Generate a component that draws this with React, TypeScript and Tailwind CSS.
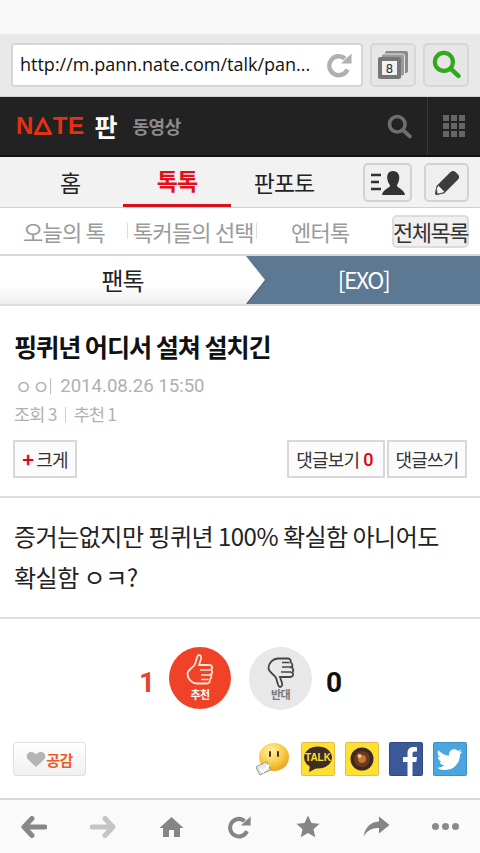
function Arrow({ color, flip }: { color: string; flip?: boolean }) {
  return (
    <svg width="26" height="22" viewBox="0 0 26 22" style={flip ? { transform: "scaleX(-1)" } : undefined}>
      <path d="M11 2.5 L3 11 L11 19.5 M4 11 H24" fill="none" stroke={color} strokeWidth="5" strokeLinecap="round" strokeLinejoin="round" />
    </svg>
  );
}
function Reload({ color, size }: { color: string; size: number }) {
  return (
    <svg width={size} height={size} viewBox="0 0 26 26">
      <path d="M20.5 17.5 A9.5 9.5 0 1 1 18 6.5" fill="none" stroke={color} strokeWidth="4.4" />
      <path d="M14 11.5 L24.5 11.5 L24.5 1.5 Z" fill={color} />
    </svg>
  );
}
function Mag({ color, size }: { color: string; size: number }) {
  return (
    <svg width={size} height={size} viewBox="0 0 28 28">
      <circle cx="11.5" cy="11.5" r="8.7" fill="none" stroke={color} strokeWidth="4" />
      <path d="M18 18 L25.5 25" stroke={color} strokeWidth="4.4" strokeLinecap="round" />
    </svg>
  );
}

export default function App() {
  return (
    <div className="w-[480px] h-[853px] overflow-hidden bg-white flex flex-col font-['Noto_Sans_CJK_KR','Noto_Sans',sans-serif]">
      <div className="h-[34px] bg-[#f8f8f8]" />

      {/* browser bar */}
      <div className="h-[63px] bg-[#e9e9e9] flex items-center pl-[11px] pb-[1px] border-b border-[#d0d0d0]">
        <div className="w-[352px] h-[44px] bg-white rounded-[4px] border-2 border-[#d6d6d6] flex items-center pl-[7px] pr-[8px] justify-between">
          <span className="font-['Open_Sans','Noto_Sans',sans-serif] text-[18px] text-[#111] whitespace-nowrap">http://m.pann.nate.com/talk/pan...</span>
          <Reload color="#b0b0b0" size={26} />
        </div>
        <div className="ml-[7px] w-[46px] h-[44px] rounded-[5px] bg-[#e6e6e6] border-2 border-[#d6d6d6] flex items-center justify-center">
          <svg width="32" height="30" viewBox="0 0 32 30">
            <rect x="8" y="1" width="23" height="22" rx="2" fill="#8a8a8a" />
            <rect x="4.5" y="4" width="23" height="22" rx="2" fill="#9a9a9a" stroke="#e6e6e6" strokeWidth="1" />
            <rect x="1" y="7" width="23" height="22" rx="2" fill="#777" />
            <rect x="5" y="11" width="15" height="14" fill="#f2f2f2" />
            <text x="12.5" y="23" fontSize="13" textAnchor="middle" fill="#333" fontFamily="Roboto, sans-serif">8</text>
          </svg>
        </div>
        <div className="ml-[7px] w-[46px] h-[44px] rounded-[5px] bg-[#e6e6e6] border-2 border-[#d6d6d6] flex items-center justify-center">
          <Mag color="#33a81c" size={29} />
        </div>
      </div>

      {/* dark header */}
      <div className="h-[60px] bg-[#222222] border-b-2 border-[#111] flex items-center">
        <span className="ml-[16px] flex items-center font-['Liberation_Sans',sans-serif] font-bold text-[24px] tracking-[0.5px] text-[#e5310f] leading-none">
          N
          <svg width="18" height="18" viewBox="0 0 18 18" className="mx-[0.5px]">
            <path d="M9 2 L16.5 16.5 H1.5 Z" fill="none" stroke="#e5310f" strokeWidth="3" />
          </svg>
          TE
        </span>
        <span className="ml-[10px] text-[25px] font-bold text-white leading-none">판</span>
        <span className="ml-[15px] text-[18px] font-bold text-[#8c8c8c] tracking-[-0.5px] leading-none">동영상</span>
        <div className="ml-auto mr-[15px]"><Mag color="#6e6e6e" size={25} /></div>
        <div className="w-[53px] h-full border-l border-[#3a3a3a] flex items-center justify-center">
          <div className="grid grid-cols-3 gap-[2px]">
            {Array.from({ length: 9 }).map((_, i) => (
              <div key={i} className="w-[6px] h-[6px] bg-[#666]" />
            ))}
          </div>
        </div>
      </div>

      {/* tabs */}
      <div className="h-[51px] bg-[#f2f2f2] border-b border-[#cfcfcf] flex">
        <div className="w-[123px] flex items-center justify-center pl-[17px] text-[23px] text-[#222] tracking-[-1px]">홈</div>
        <div className="w-[108px] flex items-center justify-center text-[23px] font-bold text-[#e0111a] tracking-[-1px] border-b-[3px] border-[#d8121c]">톡톡</div>
        <div className="w-[106px] flex items-center justify-center text-[23px] text-[#222] tracking-[-1px]">판포토</div>
        <div className="ml-[26px] mt-[6px] w-[49px] h-[39px] rounded-[5px] bg-[#efefef] border-2 border-[#d2d2d2] flex items-center justify-center">
          <svg width="36" height="26" viewBox="0 0 36 26">
            <path d="M1 5 H11 M1 12 H9 M1 19 H11" stroke="#333" strokeWidth="2.4" />
            <path d="M23 1 C28 1 30 5 29 10 C28.5 13 27 14.5 27 16 C28 18.5 34 19 35 25 H12 C13 19 19 18.5 20 16 C20 14.5 18 13 17.5 10 C16.5 5 18 1 23 1 Z" fill="#333" />
          </svg>
        </div>
        <div className="ml-[12px] mt-[6px] w-[45px] h-[39px] rounded-[5px] bg-[#efefef] border-2 border-[#d2d2d2] flex items-center justify-center">
          <svg width="28" height="28" viewBox="0 0 28 28">
            <path d="M17.5 3 C19 1.5 21 1.5 22.5 3 L25 5.5 C26.5 7 26.5 9 25 10.5 L11 24.5 L4 26 C2.5 26 2 25.5 2 24 L3.5 17 Z" fill="#3d3d3d" />
            <path d="M5.5 16.5 L11.5 22.5 L9.5 24 L4.2 25 L3.5 19 Z" fill="#f4f4f4" stroke="#555" strokeWidth="0.8" />
          </svg>
        </div>
      </div>

      {/* sub nav */}
      <div className="h-[48px] bg-white border-b-2 border-[#d8d8d8] flex items-center text-[22px] text-[#9a9a9a] tracking-[-0.8px]">
        <span className="ml-[23px] w-[104px] whitespace-nowrap">오늘의 톡</span>
        <span className="w-px h-[16px] bg-[#ddd]" />
        <span className="ml-[5px] w-[123px] whitespace-nowrap">톡커들의 선택</span>
        <span className="w-px h-[16px] bg-[#ddd]" />
        <span className="ml-[34px] w-[66px] whitespace-nowrap">엔터톡</span>
        <span className="ml-[35px] w-[77px] h-[33px] rounded-[5px] bg-[#f0f0f0] border-2 border-[#dcdcdc] flex items-center justify-center text-[#333] whitespace-nowrap tracking-[-1.5px]">전체목록</span>
      </div>

      {/* breadcrumb */}
      <div className="h-[50px] flex border-b-2 border-[#dcdcdc] bg-[#5d7892]">
        <div className="w-[246px] bg-gradient-to-b from-white from-60% to-[#efefef] flex items-center justify-center pr-[1px] text-[24px] text-[#222] tracking-[-1px] pb-[1px]">팬톡</div>
        <svg width="20" height="48" viewBox="0 0 20 48" className="shrink-0 block">
          <defs>
            <linearGradient id="chev" x1="0" y1="0" x2="0" y2="1">
              <stop offset="0.6" stopColor="#ffffff" />
              <stop offset="1" stopColor="#efefef" />
            </linearGradient>
          </defs>
          <path d="M0 24 L19 24 L0 48 Z" fill="#3f5468" transform="translate(1 0)" />
          <path d="M0 0 L19 24 L0 48 Z" fill="url(#chev)" />
        </svg>
        <div className="flex-1 flex items-center justify-center pr-[19px] pb-[1px] text-[23px] text-white tracking-[-1.5px]">[EXO]</div>
      </div>

      {/* article head */}
      <div className="h-[192px] border-b-2 border-[#dedede] px-[13px] flex flex-col">
        <h1 className="ml-[1px] mt-[23px] h-[34px] text-[25.2px] leading-[34px] font-bold text-[#111] tracking-[-1.1px] whitespace-nowrap">핑퀴년 어디서 설쳐 설치긴</h1>
        <div className="ml-[1px] mt-[11px] h-[24px] leading-[24px] text-[18.6px] text-[#b0b0b0] flex items-center">
          <span className="ml-[1px] tracking-[0.5px]">ㅇㅇ</span>
          <span className="w-px h-[16px] bg-[#bbb]" />
          <span className="ml-[9px] font-['Roboto',sans-serif]">2014.08.26 15:50</span>
        </div>
        <div className="mt-[4px] ml-[1px] h-[24px] leading-[24px] text-[17.5px] text-[#b0b0b0] tracking-[-0.8px] flex items-center">
          <span>조회 3</span>
          <span className="ml-[8px] w-px h-[15px] bg-[#ccc]" />
          <span className="ml-[8px]">추천 1</span>
        </div>
        <div className="mt-[14px] flex">
          <div className="w-[64px] h-[38px] border-2 border-[#d8d8d8] bg-[#fbfbfb] flex items-center justify-center text-[18px] text-[#333] tracking-[-0.8px]">
            <span className="text-[#e60012] font-bold text-[20px] mr-[3px] leading-none">+</span>크게
          </div>
          <div className="ml-auto w-[98px] h-[38px] border-2 border-[#d8d8d8] bg-[#fbfbfb] flex items-center justify-center pr-[3px] text-[18px] text-[#333] tracking-[-0.8px]">
            댓글보기<span className="ml-[4px] text-[#e60012] font-['Roboto',sans-serif] font-medium">0</span>
          </div>
          <div className="ml-[2px] w-[80px] h-[38px] border-2 border-[#d8d8d8] bg-[#fbfbfb] flex items-center justify-center text-[18px] text-[#333] tracking-[-0.8px]">댓글쓰기</div>
        </div>
      </div>

      {/* body */}
      <div className="h-[121px] border-b-2 border-[#e0e0e0] pt-[17px] px-[14px] text-[24px] leading-[41px] text-[#222] tracking-[-0.5px]">
        <p className="whitespace-nowrap">증거는없지만 핑퀴년 100% 확실함 아니어도</p>
        <p>확실함 ㅇㅋ?</p>
      </div>

      {/* vote */}
      <div className="h-[123px] flex items-start pt-[28px] pl-[139px]">
        <span className="w-[30px] h-[62px] leading-[72px] font-['Roboto',sans-serif] font-bold text-[28px] text-[#e2432a]">1</span>
        <div className="w-[62px] h-[62px] rounded-full bg-[#ef4226] flex flex-col items-center pt-[7px]">
          <svg width="28" height="34" viewBox="0 0 28 34">
            <path d="M13 1 C15 1 15.5 3 15 5 L13 11 L23 11 C26.5 11 27 14 25 15.5 C27 17 26.5 20 24.5 20.5 C26 22 25.5 25 23.5 25.5 C24.5 27.5 23 29.5 21 29.5 L11 29.5 C6 29.5 1.5 25 1.5 20 C1.5 16 6 14.5 8.5 11 C10.5 8 10.5 1 13 1 Z" fill="none" stroke="#ffe6d6" strokeWidth="1.8" />
            <path d="M14 16 H24 M15 21 H24 M15 25.5 H22" stroke="#ffe6d6" strokeWidth="1.5" />
          </svg>
          <span className="text-[11px] leading-[14px] font-bold text-white tracking-[-0.5px] -mt-[1px]">추천</span>
        </div>
        <div className="ml-[18px] w-[63px] h-[63px] rounded-full bg-[#e8e8e8] flex flex-col items-center pt-[7px]">
          <svg width="28" height="34" viewBox="0 0 28 34" className="rotate-180 -scale-x-100">
            <path d="M13 1 C15 1 15.5 3 15 5 L13 11 L23 11 C26.5 11 27 14 25 15.5 C27 17 26.5 20 24.5 20.5 C26 22 25.5 25 23.5 25.5 C24.5 27.5 23 29.5 21 29.5 L11 29.5 C6 29.5 1.5 25 1.5 20 C1.5 16 6 14.5 8.5 11 C10.5 8 10.5 1 13 1 Z" fill="none" stroke="#444" strokeWidth="1.8" />
            <path d="M14 16 H24 M15 21 H24 M15 25.5 H22" stroke="#444" strokeWidth="1.5" />
          </svg>
          <span className="text-[11px] leading-[14px] font-bold text-[#777] tracking-[-0.5px] -mt-[1px]">반대</span>
        </div>
        <span className="ml-[14px] h-[62px] leading-[72px] font-['Roboto',sans-serif] font-bold text-[28px] text-[#111]">0</span>
      </div>

      {/* share */}
      <div className="h-[58px] flex items-start pl-[13px] pr-[13px] border-b-2 border-[#d8d8d8]">
        <div className="w-[73px] h-[34px] rounded-[3px] border border-[#e0e0e0] bg-gradient-to-b from-white to-[#f0f0f0] flex items-center justify-center">
          <svg width="20" height="17" viewBox="0 0 20 17">
            <path d="M10 16 L2 8.5 C-1 5 1.5 1 5 1 C7 1 9 2 10 3.5 C11 2 13 1 15 1 C18.5 1 21 5 18 8.5 Z" fill="#b4b4b4" />
          </svg>
          <span className="text-[15px] font-bold text-[#ef5a2a] tracking-[-0.5px] leading-none">공감</span>
        </div>
        <div className="ml-auto flex gap-[10px] items-start">
          <svg width="34" height="34" viewBox="0 0 34 34" className="mr-[1px]">
            <defs>
              <radialGradient id="smile" cx="0.4" cy="0.3" r="0.8">
                <stop offset="0" stopColor="#fff3a8" />
                <stop offset="0.6" stopColor="#f8c53a" />
                <stop offset="1" stopColor="#e8941a" />
              </radialGradient>
            </defs>
            <ellipse cx="18" cy="15" rx="15" ry="14" fill="url(#smile)" />
            <path d="M14 10 V14 M22 10 V14" stroke="#4a3510" strokeWidth="2" strokeLinecap="round" />
            <rect x="1.5" y="22" width="12" height="9" rx="1" fill="#e8e8e8" stroke="#999" transform="rotate(-25 7 27)" />
            <path d="M4 27 L7 30 L13 23" stroke="#fff" strokeWidth="2" fill="none" />
          </svg>
          <svg width="34" height="34" viewBox="0 0 34 34">
            <rect x="0.5" y="0.5" width="33" height="33" rx="1" fill="#fee034" stroke="#e3bd4a" />
            <ellipse cx="17" cy="15.5" rx="14" ry="11" fill="#3f2c23" />
            <path d="M9 23 L8 30 L16 26 Z" fill="#3f2c23" />
            <text x="17" y="19" fontSize="10" fontWeight="700" textAnchor="middle" fill="#fee034" fontFamily="Liberation Sans, sans-serif">TALK</text>
          </svg>
          <svg width="34" height="34" viewBox="0 0 34 34">
            <rect x="0.5" y="0.5" width="33" height="33" rx="1" fill="#fee034" stroke="#e3bd4a" />
            <circle cx="17" cy="17" r="11.5" fill="#3a2a20" />
            <circle cx="17" cy="17" r="8" fill="#6b3a20" />
            <circle cx="17" cy="17" r="4" fill="#c9762f" />
            <circle cx="14.5" cy="14" r="2" fill="#e8c8a0" />
          </svg>
          <svg width="34" height="34" viewBox="0 0 34 34">
            <rect x="0.5" y="0.5" width="33" height="33" rx="1" fill="#3b5998" stroke="#2e4a80" />
            <path d="M18.5 34 V20 H14 V15 H18.5 V11 C18.5 7 21 5 24.5 5 C26 5 27.5 5.2 28 5.3 V9.5 H25.5 C24 9.5 23.5 10.5 23.5 11.8 V15 H28 L27.3 20 H23.5 V34 Z" fill="#fff" />
          </svg>
          <svg width="34" height="34" viewBox="0 0 34 34">
            <rect x="0.5" y="0.5" width="33" height="33" rx="1" fill="#4ba6e0" stroke="#3d8fc4" />
            <path d="M29 9.5 C28 10 27 10.3 26 10.4 C27 9.8 27.9 8.8 28.3 7.6 C27.3 8.2 26.2 8.6 25 8.9 C24 7.8 22.7 7.2 21.2 7.2 C18.3 7.2 16 9.5 16 12.4 C16 12.8 16 13.2 16.1 13.6 C11.8 13.4 8 11.3 5.4 8.2 C5 9 4.7 9.9 4.7 10.8 C4.7 12.6 5.6 14.2 7 15.1 C6.2 15.1 5.4 14.8 4.7 14.5 C4.7 17 6.5 19.1 8.9 19.6 C8.1 19.8 7.3 19.8 6.5 19.7 C7.2 21.8 9.1 23.3 11.4 23.3 C9 25.2 6.5 26 4 25.7 C6.4 27.2 9.2 28 12.2 28 C21.7 28 26.9 20.1 26.9 13.3 C26.9 13.1 26.9 12.8 26.9 12.6 C27.5 12 28.5 10.8 29 9.5 Z" fill="#fff" />
          </svg>
        </div>
      </div>

      {/* bottom toolbar */}
      <div className="flex-1 bg-[#fafafa] flex items-center">
        <div className="w-[68px] flex justify-center"><Arrow color="#888888" /></div>
        <div className="w-[69px] flex justify-center"><Arrow color="#c4c4c4" flip /></div>
        <div className="w-[68px] flex justify-center">
          <svg width="25" height="22" viewBox="0 0 25 22">
            <path d="M12.5 1 L24.5 12 H21 V21 H15 V14 H10 V21 H4 V12 H0.5 Z" fill="#858585" />
          </svg>
        </div>
        <div className="w-[69px] flex justify-center"><Reload color="#858585" size={24} /></div>
        <div className="w-[68px] flex justify-center">
          <svg width="24" height="23" viewBox="0 0 24 23">
            <path d="M12 0.5 L15.5 8 L23.5 8.8 L17.5 14.2 L19.3 22.3 L12 18 L4.7 22.3 L6.5 14.2 L0.5 8.8 L8.5 8 Z" fill="#858585" />
          </svg>
        </div>
        <div className="w-[69px] flex justify-center">
          <svg width="27" height="21" viewBox="0 0 27 21">
            <path d="M16 0.5 L26.5 9 L16 17.5 V12 C9 12 4 14.5 0.5 20.5 C2 12 7 6 16 5.5 Z" fill="#858585" />
          </svg>
        </div>
        <div className="flex-1 flex justify-center gap-[3px]">
          <div className="w-[7px] h-[7px] rounded-full bg-[#8a8a8a]" />
          <div className="w-[7px] h-[7px] rounded-full bg-[#8a8a8a]" />
          <div className="w-[7px] h-[7px] rounded-full bg-[#8a8a8a]" />
        </div>
      </div>
    </div>
  );
}
